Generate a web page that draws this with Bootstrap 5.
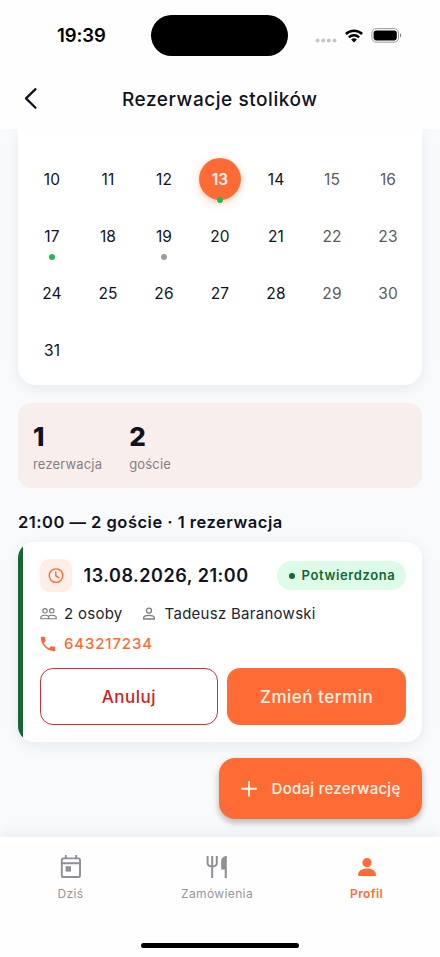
<!DOCTYPE html>
<html lang="pl">
<head>
<meta charset="utf-8">
<meta name="viewport" content="width=device-width, initial-scale=1">
<title>Rezerwacje stolików</title>
<link href="https://cdn.jsdelivr.net/npm/bootstrap@5.3.0/dist/css/bootstrap.min.css" rel="stylesheet">
<style>
body{font-family:Inter,"Liberation Sans",sans-serif;color:#10131f;background:#f8fafc;overflow:hidden}
svg{display:block;flex:none}
.screen{width:440px;height:957px}
.topbar{height:129px;background:#fefefe;z-index:3}
.statusbar{height:71px;padding:0 38px 0 57px}
.clock{font-size:18.5px;font-weight:600;color:#000;width:94px;letter-spacing:-.1px;padding-top:1px}
.island{width:138px;height:41px;background:#000;border-radius:21px}
.sysicons{margin-left:26px;gap:7px}
.sysicons .wifi{margin-right:1px}
.titlebar{height:56px;padding:0 22px 0 21.5px}
.title{font-size:19px;font-weight:500;letter-spacing:.55px;padding-top:2px}
.feed{height:708px;padding:0 18px}
.cal{height:256px;border-radius:0 0 18px 18px;background:#fff;padding:22px 6px 0;box-shadow:0 4px 14px rgba(30,50,80,.07)}
.week{display:grid;grid-template-columns:repeat(7,1fr);height:57px;text-align:center;font-size:15.5px;line-height:57px;letter-spacing:.15px}
.day{position:relative}
.off{color:#5b5b5f}
.event::after{content:"";position:absolute;left:25px;top:46px;width:6px;height:6px;border-radius:50%;background:#22b858}
.past::after{background:#9a9a9f}
.chosen span{display:block;width:42px;height:42px;margin:6.5px auto 0;border-radius:50%;background:#ff6b35;color:#fff3ec;font-weight:600;line-height:43px;box-shadow:0 3px 9px rgba(255,107,53,.32)}
.stats{margin-top:18px;height:85px;border-radius:13px;background:#f8eeeb;padding:18px 15px;gap:27px}
.num{font-size:26px;line-height:32px;font-weight:800}
.lbl{font-size:13px;line-height:20px;color:#85807f;letter-spacing:.17px;margin-top:1px}
.slot{font-size:16.5px;font-weight:600;line-height:24px;margin-top:22px;letter-spacing:.5px}
.booking{margin-top:8px;height:200px;border-radius:16px;background:#fff;overflow:hidden;box-shadow:0 3px 14px rgba(30,50,80,.08)}
.stripe{width:5px;background:#166534}
.inner{padding:17px 16px 16px 17px}
.clockbox{width:32px;height:33px;border-radius:9px;background:#ffede8}
.when{font-size:18px;font-weight:600;margin-left:11.5px;letter-spacing:.53px}
.state{height:29px;width:129px;border-radius:15px;background:#dcfce7;color:#166534;font-size:13px;font-weight:600;gap:7px;letter-spacing:.62px;margin-top:-1px;padding:1px 0 0 1px}
.state i{width:6px;height:6px;border-radius:50%;background:#166534}
.info{font-size:15px;line-height:22px;margin-top:11px;color:#23252f;letter-spacing:.28px}
.info .people{margin-right:7px}
.phone{font-size:15px;line-height:22px;margin-top:8px;color:#ff6b35;font-weight:500;letter-spacing:.85px;gap:8px}
.actions{margin:12.5px 0 0 -.5px;gap:9px}
.actions .btn,.fab{border-radius:13px;font-size:17px;font-weight:500;height:57px;letter-spacing:.52px}
.actions .btn{padding-top:8px;padding-bottom:5px}
.btn-cancel{border:1px solid #ca3038;color:#ca2424;background:#fff}
.btn-main{background:#ff6b35;color:#fff3e6}
.actions .btn-cancel:hover{background:#fff5f5;color:#b91c1c}
.btn-main:hover{background:#f45f28;color:#fff3e6}
.feed .fab{margin-top:16px;width:203px;height:61px;border-radius:16px;font-size:15px;box-shadow:0 4px 6px rgba(0,0,0,.22),0 1px 8px rgba(0,0,0,.08);letter-spacing:.27px;padding:1px 21.5px 0 21px}
.tabs{height:120px;background:#fefefe;box-shadow:0 -3px 14px rgba(30,50,80,.07);z-index:2}
.tab{color:#95979b;font-size:12px;letter-spacing:.38px;line-height:18px;padding-top:17px;gap:3px;text-decoration:none}
.tabs .tab-on{color:#ff6b35;font-weight:600}
.dzis{width:141px}.zam{width:152px}.prof{width:147px}
.homebar{width:158px;height:5.5px;border-radius:3px;background:#000;margin-bottom:9px}
</style>
<script src="https://cdn.jsdelivr.net/npm/bootstrap@5.3.0/dist/js/bootstrap.bundle.min.js"></script>
</head>
<body>
<div class="screen d-flex flex-column">
  <header class="topbar position-relative">
    <div class="statusbar d-flex align-items-center">
      <div class="clock">19:39</div>
      <div class="island"></div>
      <div class="sysicons d-flex align-items-center">
        <svg width="24" height="14" fill="#c4c4c6"><circle cx="3.5" cy="11.5" r="2"/><circle cx="9.2" cy="11.5" r="2"/><circle cx="14.8" cy="11.5" r="2"/><circle cx="20.5" cy="11.5" r="2"/></svg>
        <svg class="wifi" width="18" height="14" viewBox="0 0 18 14" fill="none" stroke="#000" stroke-width="2.5"><path d="M.9 5a11.6 11.6 0 0 1 16.2 0M3.9 8.3a7.4 7.4 0 0 1 10.2 0"/><path d="M9 13.4 6.1 10.6a4.2 4.2 0 0 1 5.8 0z" fill="#000" stroke="none"/></svg>
        <svg width="31" height="15" viewBox="0 0 31 15"><rect x=".9" y=".6" width="26.6" height="13.6" rx="4.4" fill="none" stroke="#999"/><rect x="2.6" y="2.4" width="23.2" height="10" rx="2.8"/><path d="M29 5.3c1.6.7 1.6 3.5 0 4.2z" fill="#777"/></svg>
      </div>
    </div>
    <div class="titlebar d-flex align-items-center">
      <svg width="16" height="24" viewBox="0 0 16 24" fill="none" stroke="#10131f" stroke-width="2.3" stroke-linecap="round" stroke-linejoin="round"><path d="M13.5 2.2 4 11.4l9.5 9.4"/></svg>
      <div class="title flex-grow-1 text-center pe-3">Rezerwacje stolików</div>
    </div>
  </header>

  <main class="feed">
    <section class="cal">
      <div class="week"><div class="day">10</div><div class="day">11</div><div class="day">12</div><div class="day event chosen"><span>13</span></div><div class="day">14</div><div class="day off">15</div><div class="day off">16</div></div>
      <div class="week"><div class="day event">17</div><div class="day">18</div><div class="day event past">19</div><div class="day">20</div><div class="day">21</div><div class="day off">22</div><div class="day off">23</div></div>
      <div class="week"><div class="day">24</div><div class="day">25</div><div class="day">26</div><div class="day">27</div><div class="day">28</div><div class="day off">29</div><div class="day off">30</div></div>
      <div class="week"><div class="day">31</div></div>
    </section>
    <section class="stats d-flex">
      <div><div class="num">1</div><div class="lbl">rezerwacja</div></div>
      <div><div class="num">2</div><div class="lbl">goście</div></div>
    </section>
    <h2 class="slot mb-0">21:00 — 2 goście · 1 rezerwacja</h2>
    <article class="booking d-flex">
      <div class="stripe"></div>
      <div class="inner flex-grow-1">
        <div class="d-flex align-items-center">
          <div class="clockbox d-flex align-items-center justify-content-center">
            <svg width="16" height="16" viewBox="0 0 16 16" fill="none" stroke="#f56a36" stroke-width="1.35"><circle cx="8" cy="7.6" r="6.8"/><path d="M7.8 3.6v4.3l3.3 2"/></svg>
          </div>
          <div class="when">13.08.2026, 21:00</div>
          <div class="state d-flex align-items-center justify-content-center ms-auto"><i></i>Potwierdzona</div>
        </div>
        <div class="info d-flex align-items-center">
          <svg class="people" width="17" height="16" viewBox="0 0 17 16" fill="none" stroke="#7d7d80" stroke-width="1.15"><circle cx="5" cy="4.8" r="2.2"/><circle cx="11.8" cy="4.8" r="2.2"/><path d="M.8 12.7v-1.3c0-1.3 2.3-2.2 4.2-2.2s3.7.9 3.7 2.2v1.3zM8.7 12.7h7.5v-1.3c0-1.3-2.3-2.2-4.4-2.2-1.3 0-2.5.3-3.4 1"/></svg>
          <span>2 osoby</span>
          <svg class="ms-3" width="18" height="16" viewBox="0 0 18 16" fill="none" stroke="#7d7d80" stroke-width="1.3"><circle cx="10" cy="4.6" r="2.5"/><path d="M4.7 13v-1.2c0-1.6 3-2.5 5.3-2.5s5.3.9 5.3 2.5V13z"/></svg>
          <span class="ms-2">Tadeusz Baranowski</span>
        </div>
        <div class="phone d-flex align-items-center">
          <svg width="16" height="16" viewBox="2 2 20 20" fill="#f56a36"><path d="M6.62 10.79c1.44 2.83 3.76 5.14 6.59 6.59l2.2-2.2c.27-.27.67-.36 1.02-.24 1.12.37 2.33.57 3.57.57.55 0 1 .45 1 1V20c0 .55-.45 1-1 1-9.39 0-17-7.61-17-17 0-.55.45-1 1-1h3.5c.55 0 1 .45 1 1 0 1.25.2 2.45.57 3.57.11.35.03.74-.25 1.02l-2.2 2.2z"/></svg>
          <span>643217234</span>
        </div>
        <div class="actions d-flex">
          <button class="btn btn-cancel flex-fill w-50">Anuluj</button>
          <button class="btn btn-main flex-fill w-50">Zmień termin</button>
        </div>
      </div>
    </article>
    <button class="btn btn-main fab border-0 d-flex align-items-center justify-content-between ms-auto">
      <svg width="18" height="18" viewBox="0 0 18 18" stroke="#fff3e6" stroke-width="1.9"><path d="M9 .9v15.6M1.2 8.7h15.6"/></svg>
      <span>Dodaj rezerwację</span>
    </button>
  </main>

  <nav class="tabs d-flex flex-column align-items-center position-relative">
    <div class="d-flex w-100 justify-content-between flex-grow-1">
      <a href="#" class="tab d-flex flex-column align-items-center dzis">
        <svg width="26" height="28" viewBox="0 0 26 28" fill="none" stroke="#8e9095" stroke-width="1.9"><rect x="3.8" y="4.4" width="18.2" height="18.6" rx="1.6"/><path d="M3.5 9.2h19M7.8 1v3M18.2 1v3"/><rect x="7.6" y="12.2" width="5.4" height="5.4" fill="#8e9095" stroke="none"/></svg>
        <span>Dziś</span></a>
      <a href="#" class="tab d-flex flex-column align-items-center zam">
        <svg width="26" height="28" viewBox="0 0 26 28" fill="none" stroke="#8e9095" stroke-width="2"><path d="M3.6 2v7.3c0 2 1.6 3.1 4.6 3.1s4.6-1.1 4.6-3.1V2M8.2 2v22"/><path d="M22.8 2v22h-2.1v-8.6h-3.5V7.2c0-3 2.4-5.2 5.6-5.2z" fill="#8e9095" stroke="none"/></svg>
        <span>Zamówienia</span></a>
      <a href="#" class="tab tab-on d-flex flex-column align-items-center prof">
        <svg width="26" height="28" viewBox="0 0 26 28" fill="#ff6b35"><circle cx="13" cy="8.7" r="4.6"/><path d="M4 20.9c0-4.4 4.3-6.5 9-6.5s9 2.1 9 6.5c0 .8-.4 1.1-1.1 1.1H5.1c-.7 0-1.1-.3-1.1-1.1z"/></svg>
        <span>Profil</span></a>
    </div>
    <div class="homebar"></div>
  </nav>
</div>
</body>
</html>
